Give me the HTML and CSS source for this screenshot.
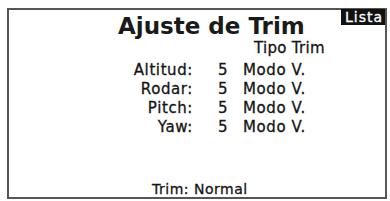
FILE: index.html
```html
<!DOCTYPE html>
<html lang="es">
<head>
<meta charset="utf-8">
<link rel="stylesheet" href="styles.css">
</head>
<body>
<div class="screen">
  <div class="header">
    <h1 class="title">Ajuste de Trim</h1>
    <div class="badge">Lista</div>
  </div>
  <div class="table">
    <div class="colhead">Tipo Trim</div>
    <div class="row"><span class="label">Altitud:</span><span class="num">5</span><span class="mode">Modo V.</span></div>
    <div class="row"><span class="label">Rodar:</span><span class="num">5</span><span class="mode">Modo V.</span></div>
    <div class="row"><span class="label">Pitch:</span><span class="num">5</span><span class="mode">Modo V.</span></div>
    <div class="row"><span class="label">Yaw:</span><span class="num">5</span><span class="mode">Modo V.</span></div>
  </div>
  <div class="footer">Trim: Normal</div>
</div>
</body>
</html>
```

FILE: styles.css
```css
html, body {
  margin: 0;
  padding: 0;
  background: #ffffff;
}
body {
  width: 390px;
  height: 201px;
  padding: 8px 3px 2px 7px;
  box-sizing: border-box;
  font-family: "DejaVu Sans", sans-serif;
  color: #151515;
}
.screen {
  height: 100%;
  box-sizing: border-box;
  border: 2px solid #555555;
  display: flex;
  flex-direction: column;
}
.header {
  display: flex;
  justify-content: space-between;
  align-items: flex-start;
  height: 29px;
}
.title {
  margin: 3px 0 0 109px;
  font-size: 23px;
  font-weight: bold;
  letter-spacing: 0;
  line-height: 26px;
  color: #1a1a1a;
}
.badge {
  background: #111111;
  color: #ffffff;
  font-size: 14px;
  line-height: 16px;
  padding: 0 2px 0 4px;
  margin-top: -1px;
  letter-spacing: 1px;
  -webkit-text-stroke: 0.3px #ffffff;
}
.table {
  display: flex;
  flex-direction: column;
  -webkit-text-stroke: 0.3px #151515;
}
.colhead {
  margin-left: 245px;
  font-size: 15px;
  line-height: 18px;
  letter-spacing: 0.3px;
  margin-bottom: 4px;
}
.row {
  display: flex;
  font-size: 15px;
  line-height: 19px;
  letter-spacing: 0.6px;
}
.label {
  width: 184px;
  text-align: right;
}
.num {
  margin-left: 25px;
  width: 25px;
}
.footer {
  margin-top: auto;
  margin-left: 143px;
  font-size: 14px;
  line-height: 16px;
  letter-spacing: 0.5px;
  padding-bottom: 0;
  -webkit-text-stroke: 0.3px #151515;
}
```
